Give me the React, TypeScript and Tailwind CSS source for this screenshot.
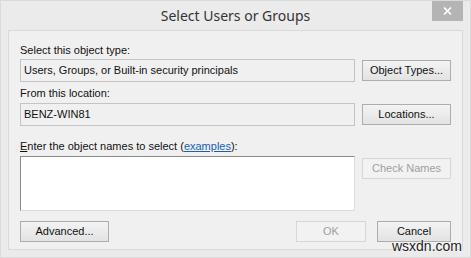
import React from 'react';

// Classic Windows 8 "Select Users or Groups" dialog

const Btn = ({ label, disabled, w }: { label: React.ReactNode; disabled?: boolean; w: string }) => (
  <div
    className={`${w} h-[21px] flex items-center justify-center border text-[11px] leading-none shrink-0 ${
      disabled
        ? 'border-[#d6d6d6] bg-[#f2f2f2] text-[#a0a0a0]'
        : 'border-[#adadad] bg-gradient-to-b from-[#f3f3f3] to-[#e3e3e3] text-[#111]'
    }`}
  >
    {label}
  </div>
);

const ReadBox = ({ text }: { text: string }) => (
  <div className="flex-1 h-[23px] border border-[#c4c4c4] bg-[#f0f0f0] flex items-center px-[3px] text-[11px] text-[#111]">
    {text}
  </div>
);

export default function App() {
  return (
    <div
      className="relative w-[471px] h-[258px] bg-[#ebebeb] border border-[#dadada] flex flex-col overflow-hidden"
      style={{ fontFamily: '"Liberation Sans", Arial, sans-serif' }}
    >
      {/* title bar */}
      <div className="h-[29px] shrink-0 flex items-center justify-center">
        <span
          className="text-[14px] text-[#333]"
          style={{ fontFamily: '"Segoe UI", "Noto Sans", sans-serif' }}
        >
          Select Users or Groups
        </span>
      </div>
      <div className="absolute top-0 right-[7px] w-[31px] h-[20px] bg-[#b4b4b4] flex items-center justify-center">
        <svg width="9" height="8" viewBox="0 0 9 8">
          <path d="M1 0.5 L8 7.5 M8 0.5 L1 7.5" stroke="#fff" strokeWidth="1.6" />
        </svg>
      </div>

      {/* body panel */}
      <div className="mx-[7px] h-[220px] border border-[#d9d9d9] bg-[#f0f0f0] pl-[11px] pr-[11px] pt-[13px] flex flex-col">
        <div className="text-[11px] leading-[13px] text-[#111]">Select this object type:</div>
        <div className="mt-[2px] flex items-center gap-[7px]">
          <ReadBox text="Users, Groups, or Built-in security principals" />
          <Btn label="Object Types..." w="w-[89px]" />
        </div>

        <div className="mt-[5px] text-[11px] leading-[13px] text-[#111]">From this location:</div>
        <div className="mt-[3px] flex items-center gap-[7px]">
          <ReadBox text="BENZ-WIN81" />
          <Btn label="Locations..." w="w-[89px]" />
        </div>

        <div className="mt-[14px] text-[11px] leading-[13px] text-[#111]">
          <span className="underline">E</span>nter the object names to select (
          <span className="text-[#1a5fb4] underline">examples</span>):
        </div>
        <div className="mt-[3px] flex items-start gap-[7px]">
          <div className="flex-1 h-[55px] bg-white border-t border-l border-[#8a8a8a] border-r border-b border-r-[#dcdcdc] border-b-[#dcdcdc]" />
          <div className="mt-[2px]">
            <Btn label="Check Names" disabled w="w-[89px]" />
          </div>
        </div>

        <div className="mt-[10px] flex items-center">
          <Btn label="Advanced..." w="w-[89px]" />
          <div className="flex-1" />
          <Btn label="OK" disabled w="w-[70px]" />
          <div className="w-[11px]" />
          <Btn label="Cancel" w="w-[74px]" />
        </div>
      </div>

      {/* watermark overlay */}
      <div
        className="absolute right-[8px] bottom-[4px] text-[14px] leading-none text-[#222]"
        style={{ textShadow: '0 0 2px #fff, 0 0 2px #fff' }}
      >
        wsxdn.com
      </div>
    </div>
  );
}
